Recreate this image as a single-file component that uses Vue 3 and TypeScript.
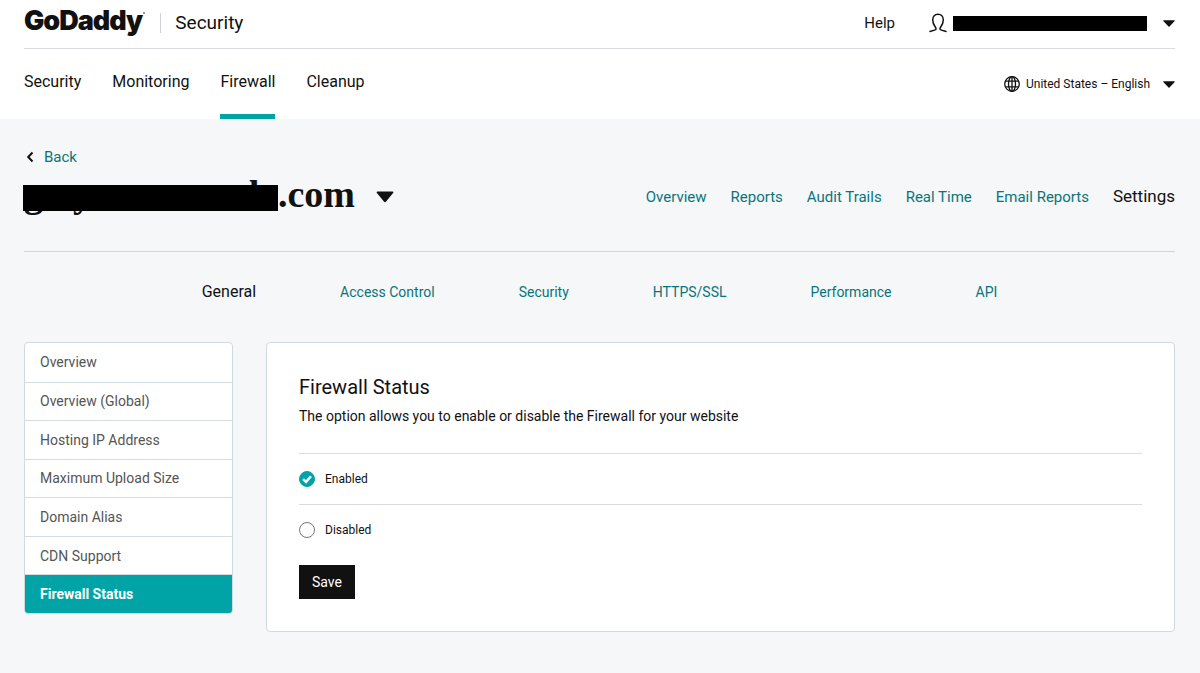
<script setup lang="ts">
import { ref } from 'vue'

interface Tab {
  label: string
  active?: boolean
}

const productTabs: Tab[] = [
  { label: 'Security' },
  { label: 'Monitoring' },
  { label: 'Firewall', active: true },
  { label: 'Cleanup' },
]

const siteTabs: Tab[] = [
  { label: 'Overview' },
  { label: 'Reports' },
  { label: 'Audit Trails' },
  { label: 'Real Time' },
  { label: 'Email Reports' },
  { label: 'Settings', active: true },
]

const settingTabs: Tab[] = [
  { label: 'General', active: true },
  { label: 'Access Control' },
  { label: 'Security' },
  { label: 'HTTPS/SSL' },
  { label: 'Performance' },
  { label: 'API' },
]

const sideItems = [
  'Overview',
  'Overview (Global)',
  'Hosting IP Address',
  'Maximum Upload Size',
  'Domain Alias',
  'CDN Support',
  'Firewall Status',
]

const currentItem = ref('Firewall Status')
const status = ref<'enabled' | 'disabled'>('enabled')
</script>

<template>
  <div class="page">
    <header class="header">
      <div class="top-row">
        <a class="logo" href="#">GoDaddy<span class="logo-dot"></span></a>
        <span class="divider"></span>
        <span class="product">Security</span>
        <a class="help" href="#">Help</a>
        <button class="account" type="button" aria-label="Account menu">
          <svg class="person" viewBox="0 0 18 20" aria-hidden="true">
            <path d="M1 18.4c2-.5 4.200-1 5.600-1.700.8-.5.4-1.600-.2-2.400C4.800 12 3.700 9.600 3.700 7c0-3.600 2.100-5.700 5.300-5.700s5.300 2.100 5.300 5.700c0 2.600-1.100 5-2.700 7.300-.6.8-1 1.900-.2 2.400 1.400.7 3.600 1.200 5.600 1.700" />
          </svg>
          <span class="account-name"></span>
          <svg class="caret" viewBox="0 0 12 7" aria-hidden="true"><path d="M.9.300h10.200c.6 0 .8.500.4.900L6.500 6.600c-.3.300-.7.300-1 0L.500 1.200C.1.800.3.300.9.300z" /></svg>
        </button>
      </div>
      <div class="nav-row">
        <nav class="product-tabs">
          <a v-for="tab in productTabs" :key="tab.label" href="#" :class="{ active: tab.active }">{{ tab.label }}</a>
        </nav>
        <label class="locale">
          <svg class="globe" viewBox="0 0 16 16" aria-hidden="true">
            <circle cx="8" cy="8" r="7.300" />
            <ellipse cx="8" cy="8" rx="3.500" ry="7.300" />
            <path d="M8 .7v14.600M1.500 5.100h13M1.500 10.900h13" />
          </svg>
          <select aria-label="Language">
            <option>United States – English</option>
          </select>
          <svg class="caret" viewBox="0 0 12 7" aria-hidden="true"><path d="M.9.300h10.200c.6 0 .8.500.4.900L6.500 6.600c-.3.300-.7.300-1 0L.500 1.200C.1.800.3.300.9.300z" /></svg>
        </label>
      </div>
    </header>

    <main class="content">
      <a class="back" href="#">
        <svg viewBox="0 0 12 12" aria-hidden="true"><path d="M8.500 1.500 4.200 6l4.300 4.500" /></svg>
        <span>Back</span>
      </a>

      <div class="site-row">
        <h1 class="site">
          <span class="hidden-name"><span>g</span><span>y</span><span>t</span><span>th</span></span>
          <span>.com</span>
          <button class="site-menu" type="button" aria-label="Switch site">
            <svg viewBox="0 0 18 12" aria-hidden="true"><path d="M1.500.5h15c.9 0 1.200.8.6 1.400l-7.200 8.800c-.5.600-1.300.600-1.800 0L.9 1.900C.3 1.300.6.500 1.500.5z" /></svg>
          </button>
        </h1>
        <nav class="site-tabs">
          <a v-for="tab in siteTabs" :key="tab.label" href="#" :class="{ active: tab.active }">{{ tab.label }}</a>
        </nav>
      </div>

      <nav class="setting-tabs">
        <a v-for="tab in settingTabs" :key="tab.label" href="#" :class="{ active: tab.active }">{{ tab.label }}</a>
      </nav>

      <div class="columns">
        <nav class="side">
          <a
            v-for="item in sideItems"
            :key="item"
            href="#"
            :class="{ active: item === currentItem }"
            @click.prevent="currentItem = item"
          >{{ item }}</a>
        </nav>

        <section class="card">
          <h2>Firewall Status</h2>
          <p>The option allows you to enable or disable the Firewall for your website</p>
          <form @submit.prevent>
            <label class="choice">
              <input v-model="status" type="radio" name="status" value="enabled" />
              <svg class="mark" viewBox="0 0 16 16" aria-hidden="true">
                <circle cx="8" cy="8" r="7.500" />
                <path d="M4.100 8.100 7 10.900 12 5.300" />
              </svg>
              <span>Enabled</span>
            </label>
            <label class="choice">
              <input v-model="status" type="radio" name="status" value="disabled" />
              <svg class="mark" viewBox="0 0 16 16" aria-hidden="true">
                <circle cx="8" cy="8" r="7.500" />
                <path d="M4.100 8.100 7 10.900 12 5.300" />
              </svg>
              <span>Disabled</span>
            </label>
            <button class="save" type="submit">Save</button>
          </form>
        </section>
      </div>
    </main>
  </div>
</template>

<style>
body {
  margin: 0;
  background: #f5f7f9;
}
</style>

<style scoped>
.page {
  min-height: 100vh;
  background: #f5f7f9;
  color: #111;
  font-family: Roboto, "Liberation Sans", sans-serif;
  font-size: 14px;
  line-height: 20px;
}

.page *,
.page *::before {
  box-sizing: border-box;
}

a {
  color: inherit;
  text-decoration: none;
}

button,
select {
  border: 0;
  padding: 0;
  background: none;
  color: inherit;
  font: inherit;
  cursor: pointer;
}

.header {
  background: #fff;
  padding: 0 25px 0 24px;
}

.top-row {
  display: flex;
  align-items: center;
  height: 49px;
  padding-bottom: 2px;
  border-bottom: 1px solid #d9dcde;
}

.logo {
  display: flex;
  font-family: Inter, sans-serif;
  font-size: 27px;
  font-weight: 900;
  line-height: 32px;
  letter-spacing: -1px;
  padding-bottom: 4px;
}

.logo-dot {
  width: 2px;
  height: 2px;
  margin: 7px 0 0 1px;
  border-radius: 50%;
  background: #777;
}

.divider {
  width: 1px;
  height: 20px;
  margin: 0 14px 0 15px;
  background: #d0d3d5;
}

.product {
  font-size: 19px;
}

.help {
  margin-left: auto;
  font-size: 15px;
}

.account {
  display: flex;
  align-items: center;
  margin-left: 34px;
}

.person {
  width: 18px;
  height: 20px;
  fill: none;
  stroke: #111;
  stroke-width: 1.5;
  stroke-linecap: round;
}

.account-name {
  width: 194px;
  height: 15px;
  margin: 0 16px 0 6px;
  background: #000;
}

.caret {
  width: 12px;
  height: 7px;
  flex: none;
  fill: #111;
}

.nav-row {
  display: flex;
  justify-content: space-between;
  height: 70px;
}

.product-tabs {
  display: flex;
  gap: 31px;
}

.product-tabs a {
  padding-top: 23px;
  border-bottom: 5px solid transparent;
  font-size: 16px;
}

.product-tabs .active {
  border-color: #00a4a6;
}

.locale {
  display: flex;
  align-items: center;
  font-size: 12px;
}

.globe {
  width: 16px;
  height: 16px;
  margin-right: 6px;
  fill: none;
  stroke: #111;
  stroke-width: 1.3;
}

.locale select {
  appearance: none;
  margin-right: 12px;
}

.content {
  padding: 28px 25px 40px 24px;
}

.back {
  display: inline-flex;
  align-items: center;
  gap: 8px;
  color: #09757a;
  font-size: 15px;
}

.back svg {
  width: 12px;
  height: 12px;
  fill: none;
  stroke: #111;
  stroke-width: 2;
}

.site-row {
  display: flex;
  align-items: flex-start;
  justify-content: space-between;
  height: 84px;
  border-bottom: 1px solid #cfd5d9;
}

.site {
  display: flex;
  align-items: center;
  margin: 5px 0 0;
  font-family: "Liberation Serif", serif;
  font-size: 38px;
  font-weight: 700;
  line-height: 42px;
}

.hidden-name {
  position: relative;
  display: grid;
  grid-template-columns: 49px 42px 121px 42px;
}

.hidden-name::before {
  content: "";
  position: absolute;
  top: 12px;
  left: -1px;
  width: 255px;
  height: 26px;
  background: #000;
}

.site-menu {
  display: flex;
  margin: 6px 0 0 21px;
}

.site-menu svg {
  width: 18px;
  height: 12px;
  fill: #111;
}

.site-tabs {
  display: flex;
  align-items: baseline;
  gap: 24px;
  padding-top: 18px;
  color: #09757a;
  font-size: 15px;
}

.site-tabs .active {
  color: #111;
  font-size: 17px;
}

.setting-tabs {
  display: flex;
  align-items: baseline;
  justify-content: center;
  gap: 84px;
  padding: 30px 0 40px;
  color: #09757a;
}

.setting-tabs .active {
  color: #111;
  font-size: 16px;
}

.columns {
  display: grid;
  grid-template-columns: 209px 1fr;
  align-items: start;
  gap: 33px;
}

.side {
  display: grid;
  grid-auto-rows: 1fr;
  min-height: 272px;
  overflow: hidden;
  border: 1px solid #cfdadf;
  border-radius: 4px;
  background: #fff;
  color: #555;
}

.side a {
  display: flex;
  align-items: center;
  padding: 0 15px;
}

.side a + a {
  border-top: 1px solid #d5dbdf;
}

.side .active {
  background: #00a4a6;
  color: #fff;
  font-weight: 700;
}

.card {
  padding: 32px;
  border: 1px solid #cfdadf;
  border-radius: 4px;
  background: #fff;
}

h2 {
  margin: 0;
  font-size: 20px;
  font-weight: 400;
  line-height: 24px;
}

.card p {
  margin: 7px 0 27px;
}

.choice {
  display: flex;
  align-items: center;
  gap: 10px;
  height: 51px;
  border-top: 1px solid #d9dcde;
  font-size: 12px;
  position: relative;
}

.choice input {
  position: absolute;
  width: 16px;
  height: 16px;
  margin: 0;
  opacity: 0;
}

.mark {
  width: 16px;
  height: 16px;
  fill: #fff;
  stroke: #777;
  stroke-width: 1;
}

.mark path {
  fill: none;
  stroke: #fff;
  stroke-width: 2.4;
}

input:checked + .mark circle {
  fill: #00a4a6;
  stroke: #00a4a6;
}

.save {
  display: block;
  margin-top: 10px;
  padding: 7px 13px;
  background: #111;
  color: #fff;
}
</style>
